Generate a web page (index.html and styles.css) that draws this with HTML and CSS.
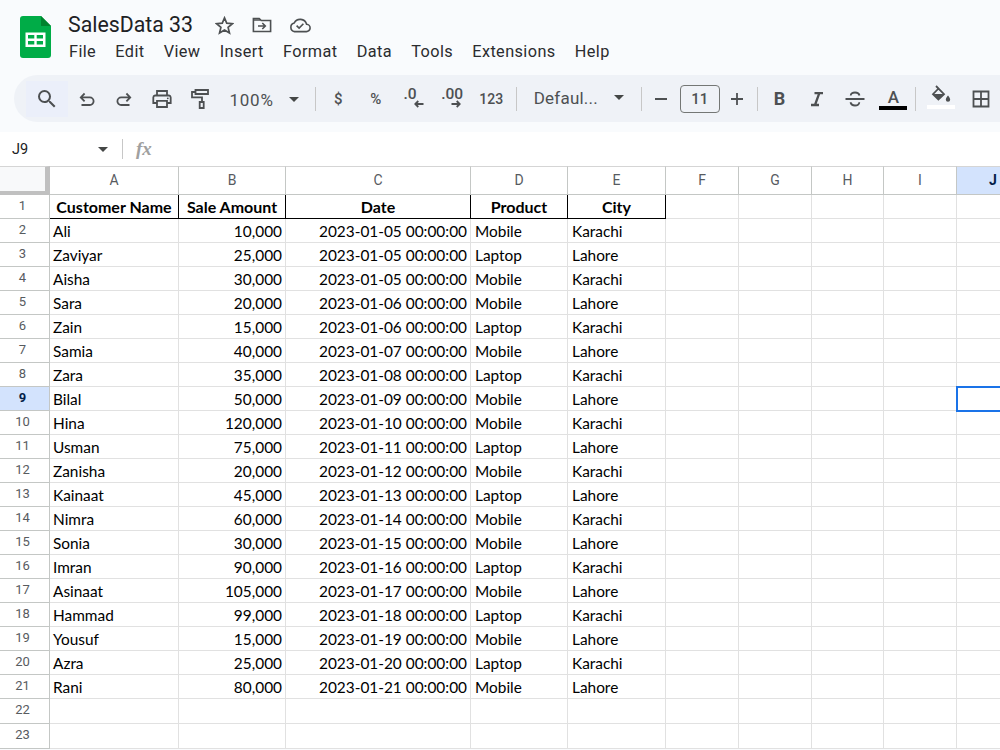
FILE: index.html
```html
<!DOCTYPE html>
<html lang="en">
<head>
    <meta charset="UTF-8">
    <meta name="viewport" content="width=device-width, initial-scale=1.0">
    <title>SalesData 33</title>
    <link rel="stylesheet" href="styles.css">
</head>
<body>
    <header class="header">
        <svg class="logo" viewBox="0 0 31 42">
            <path d="M3 0h18l10 10v29a3 3 0 0 1-3 3H3a3 3 0 0 1-3-3V3a3 3 0 0 1 3-3z"/>
            <path d="M21 0l10 10H21z"/>
            <path fill-rule="evenodd" d="M5.500 16.500h20v14.500h-20zM8 19v3.500h6.300V19zM16.700 19v3.500H23V19zM8 25v3.500h6.300V25zM16.700 25v3.500H23V25z"/>
        </svg>
        <div class="header-main">
            <div class="title-row">
                <h1 class="title">SalesData 33</h1>
                <svg class="title-icon star" viewBox="0 0 18 18"><path d="M9 1.800l2.100 5 5.400.5-4.100 3.500 1.300 5.300L9 13.200l-4.700 2.900 1.300-5.300L1.500 7.300l5.400-.5z"/></svg>
                <svg class="title-icon folder" viewBox="0 0 20 16"><path d="M1.400 1.500h5.800l2 2h9.400v11H1.400z"/><path d="M1.400 3h7M6 9h7M10.300 6l3 3-3 3"/></svg>
                <svg class="title-icon cloud" viewBox="0 0 22 16"><path d="M5.500 14.600h11.700a3.700 3.700 0 0 0 .4-7.400A6.700 6.700 0 0 0 5.200 6 4.400 4.400 0 0 0 5.500 14.600z"/><path d="M7.600 8.700l2.500 2.400 4.300-4.400"/></svg>
            </div>
            <nav class="menu">
                <span>File</span><span>Edit</span><span>View</span><span>Insert</span><span>Format</span><span>Data</span><span>Tools</span><span>Extensions</span><span>Help</span>
            </nav>
        </div>
    </header>

    <div class="toolbar">
        <div class="tool search">
            <svg width="24" height="24" viewBox="0 0 24 24"><path class="solid" d="M15.500 14h-.79l-.28-.27A6.470 6.470 0 0 0 16 9.500 6.500 6.500 0 1 0 9.500 16c1.610 0 3.090-.59 4.230-1.570l.27.28v.79l5 4.990L20.490 19l-4.990-5zm-6 0C7.010 14 5 11.990 5 9.500S7.010 5 9.500 5 14 7.010 14 9.500 11.990 14 9.500 14z"/></svg>
        </div>
        <div class="tool">
            <svg width="16" height="16" viewBox="0 0 16 16"><path d="M2.500 14h8.300a3.800 3.800 0 0 0 0-7.600H2M5.600 2.500L1.800 6.400l3.800 3.900"/></svg>
        </div>
        <div class="tool">
            <svg width="16" height="16" viewBox="0 0 16 16"><path d="M13.500 14H5.200a3.800 3.800 0 0 1 0-7.600H14M10.400 2.500l3.800 3.900-3.800 3.900"/></svg>
        </div>
        <div class="tool">
            <svg width="20" height="20" viewBox="0 0 20 20"><path d="M5 6V2h10v4M4.500 14H1.300V8.500A2 2 0 0 1 3 6.500h14a2 2 0 0 1 1.700 2V14h-3.200M5 11.800h10V18H5z"/><circle class="solid" cx="15.800" cy="9.300" r=".9"/></svg>
        </div>
        <div class="tool paint">
            <svg width="20" height="22" viewBox="0 0 20 22"><path d="M5.500 2h12.500v4H5.500zM5.500 4H2v5.300h10V14M9.700 14h4v6h-4z"/></svg>
        </div>
        <div class="zoom">100%<i class="caret"></i></div>
        <i class="separator"></i>
        <div class="tool text-tool dollar">$</div>
        <div class="tool text-tool">%</div>
        <div class="tool decimal">
            <span>.0</span>
            <svg width="10" height="8" viewBox="0 0 10 8"><path d="M9.500 4H1.500M4.300 1L1.300 4l3 3"/></svg>
        </div>
        <div class="tool decimal">
            <span>.00</span>
            <svg width="10" height="8" viewBox="0 0 10 8"><path d="M.5 4h8M5.700 1l3 3-3 3"/></svg>
        </div>
        <div class="tool number-format">123</div>
        <i class="separator"></i>
        <div class="font-name">Defaul...<i class="caret"></i></div>
        <i class="separator"></i>
        <div class="tool minus">
            <svg width="14" height="14" viewBox="0 0 14 14"><path d="M1 7h12"/></svg>
        </div>
        <div class="font-size">11</div>
        <div class="tool plus">
            <svg width="14" height="14" viewBox="0 0 14 14"><path d="M1 7h12M7 1v12"/></svg>
        </div>
        <i class="separator"></i>
        <div class="tool bold">B</div>
        <div class="tool">
            <svg width="14" height="16" viewBox="0 0 14 16"><path class="thick" d="M4.500 2.200h8.500M1 14h8M9.300 2.200L5 14"/></svg>
        </div>
        <div class="tool">
            <svg width="20" height="18" viewBox="0 0 20 18"><path d="M.5 9h19M14.500 5.500C14 3.300 12.400 2.500 10 2.500S5.700 3.700 5.700 5.600M5.500 12.300c.5 2.300 2.100 3.200 4.500 3.200s4.300-1 4.300-3.200"/></svg>
        </div>
        <div class="tool color-tool"><span>A</span><i class="swatch"></i></div>
        <i class="separator"></i>
        <div class="tool color-tool fill-tool">
            <svg width="20" height="18" viewBox="0 0 20 18"><path d="M5 1l8 8.200-5.600 5.300L2 9.200 7.500 3.500"/><path class="solid" d="M2.500 9h10l-5 5.300zM17 10.500s-2.200 2.500-2.200 4a2.200 2.200 0 0 0 4.400 0c0-1.500-2.200-4-2.200-4z"/></svg>
            <i class="swatch white"></i>
        </div>
        <div class="tool borders">
            <svg width="18" height="18" viewBox="0 0 18 18"><path d="M1.500 1.500h15v15h-15zM9 1.500v15M1.500 9h15"/></svg>
        </div>
    </div>

    <div class="formula-bar">
        <div class="name-box">J9<i class="caret"></i></div>
        <i class="separator"></i>
        <span class="fx">fx</span>
    </div>

    <table class="sheet">
        <colgroup>
            <col class="col-head"><col class="col-a"><col class="col-b"><col class="col-c"><col class="col-d"><col class="col-e"><col class="col-f"><col class="col-g"><col class="col-h"><col class="col-i"><col class="col-j">
        </colgroup>
        <thead>
            <tr>
                <th class="corner"></th><th>A</th><th>B</th><th>C</th><th>D</th><th>E</th><th>F</th><th>G</th><th>H</th><th>I</th><th class="active">J</th>
            </tr>
        </thead>
        <tbody id="rows"></tbody>
    </table>

<script>
const sales = [
    ['Ali', '10,000', '2023-01-05', 'Mobile', 'Karachi'],
    ['Zaviyar', '25,000', '2023-01-05', 'Laptop', 'Lahore'],
    ['Aisha', '30,000', '2023-01-05', 'Mobile', 'Karachi'],
    ['Sara', '20,000', '2023-01-06', 'Mobile', 'Lahore'],
    ['Zain', '15,000', '2023-01-06', 'Laptop', 'Karachi'],
    ['Samia', '40,000', '2023-01-07', 'Mobile', 'Lahore'],
    ['Zara', '35,000', '2023-01-08', 'Laptop', 'Karachi'],
    ['Bilal', '50,000', '2023-01-09', 'Mobile', 'Lahore'],
    ['Hina', '120,000', '2023-01-10', 'Mobile', 'Karachi'],
    ['Usman', '75,000', '2023-01-11', 'Laptop', 'Lahore'],
    ['Zanisha', '20,000', '2023-01-12', 'Mobile', 'Karachi'],
    ['Kainaat', '45,000', '2023-01-13', 'Laptop', 'Lahore'],
    ['Nimra', '60,000', '2023-01-14', 'Mobile', 'Karachi'],
    ['Sonia', '30,000', '2023-01-15', 'Mobile', 'Lahore'],
    ['Imran', '90,000', '2023-01-16', 'Laptop', 'Karachi'],
    ['Asinaat', '105,000', '2023-01-17', 'Mobile', 'Lahore'],
    ['Hammad', '99,000', '2023-01-18', 'Laptop', 'Karachi'],
    ['Yousuf', '15,000', '2023-01-19', 'Mobile', 'Lahore'],
    ['Azra', '25,000', '2023-01-20', 'Laptop', 'Karachi'],
    ['Rani', '80,000', '2023-01-21', 'Mobile', 'Lahore']
];
const headings = ['Customer Name', 'Sale Amount', 'Date', 'Product', 'City'];
const rows = document.getElementById('rows');

// Row 1 holds the headings, rows 2 to 21 the sales, the rest are empty
for (let number = 1; number <= 23; number++) {
    const row = document.createElement('tr');
    const head = document.createElement('th');
    head.textContent = number;
    row.appendChild(head);

    let values = [];
    if (number === 1) {
        values = headings;
        row.className = 'headings';
    } else if (sales[number - 2]) {
        values = sales[number - 2].slice();
        values[2] += ' 00:00:00';
    } else {
        row.className = 'empty';
    }

    for (let column = 0; column < 10; column++) {
        const cell = document.createElement('td');
        cell.textContent = values[column] || '';
        row.appendChild(cell);
    }

    if (number === 9) {
        head.className = 'active';
        row.lastChild.className = 'selected';
    }
    rows.appendChild(row);
}
</script>
</body>
</html>
```
FILE: styles.css
```css
/* General Styles */
body {
    font-family: Roboto, Arial, sans-serif;
    margin: 0;
    height: 750px;
    overflow: hidden;
    background-color: #f9fbfd;
    color: #202124;
}

svg {
    display: block;
    flex: none;
}

svg path {
    fill: none;
    stroke: #4d5052;
    stroke-width: 1.8;
}

svg .solid {
    fill: #4d5052;
    stroke: none;
}

svg .thick {
    stroke-width: 2.3;
}

/* Header */
.header {
    display: flex;
    height: 75px;
}

.logo {
    width: 31px;
    height: 42px;
    margin: 16px 17px 0 20px;
}

.logo path {
    stroke: none;
}

.logo path:nth-child(1) {
    fill: #00ac47;
}

.logo path:nth-child(2) {
    fill: #00832d;
}

.logo path:nth-child(3) {
    fill: #fff;
}

.title-row {
    display: flex;
    align-items: center;
    height: 28px;
    padding-top: 11px;
}

.title {
    width: 147px;
    margin: -2px 0 0;
    font-size: 21.3px;
    font-weight: 400;
    white-space: nowrap;
}

.title-icon path {
    stroke-width: 1.6;
}

.star {
    width: 19px;
    height: 19px;
    margin-right: 18px;
}

.folder {
    width: 20px;
    height: 16px;
    margin-right: 17px;
}

.cloud {
    width: 22px;
    height: 16px;
}

.menu {
    display: flex;
    gap: 19.2px;
    padding: 3px 0 0 1px;
    font-size: 16.3px;
    line-height: 20px;
    letter-spacing: 0.4px;
    color: #2b2c2f;
}

/* Toolbar */
.toolbar {
    display: flex;
    align-items: center;
    height: 47px;
    margin-left: 14px;
    padding-left: 12px;
    background-color: #eff2f7;
    border-radius: 24px 0 0 24px;
    color: #4d5052;
    overflow: hidden;
}

.tool {
    display: flex;
    flex: none;
    align-items: center;
    justify-content: center;
    box-sizing: border-box;
    width: 37.6px;
    height: 36px;
}

.search {
    width: 42px;
    background-color: #ebeffa;
}

.paint {
    padding-top: 1px;
}

.zoom {
    display: flex;
    flex: none;
    align-items: center;
    justify-content: space-between;
    width: 70px;
    margin: 2px 16px 0 11px;
    font-size: 17px;
    letter-spacing: 0.8px;
}

.caret {
    border: 5px solid transparent;
    border-top-color: #444746;
    border-bottom: 0;
}

.separator {
    flex: none;
    width: 1px;
    height: 24px;
    background-color: #c7c7c7;
}

.text-tool {
    font-size: 15px;
    font-weight: 500;
}

.dollar {
    margin-left: 3px;
}

.decimal {
    flex-direction: column;
    align-items: flex-start;
    padding-left: 9px;
    font-size: 15.5px;
    font-weight: 500;
    line-height: 12px;
}

.decimal span {
    margin-top: -2px;
}

.decimal svg {
    margin-left: 10px;
}

.number-format {
    width: 43px;
    margin-right: 3px;
    font-size: 14px;
    font-weight: 500;
}

.font-name {
    display: flex;
    flex: none;
    align-items: center;
    justify-content: space-between;
    width: 90px;
    margin: -2px 17px 0;
    font-size: 17px;
    letter-spacing: 0.2px;
}

.minus {
    width: 38px;
}

.plus {
    width: 34px;
    margin-right: 3px;
}

.font-size {
    flex: none;
    width: 38px;
    height: 26px;
    border: 1px solid #747775;
    border-radius: 4px;
    font-size: 15px;
    font-weight: 500;
    line-height: 26px;
    text-align: center;
}

.bold {
    margin-left: 3px;
    font-size: 18px;
    font-weight: 700;
}

.color-tool {
    flex-direction: column;
    margin: 1px 3px 0 1px;
    padding-top: 1px;
    font-size: 17px;
    font-weight: 500;
    line-height: 17px;
}

.swatch {
    width: 28px;
    height: 4px;
    background-color: #000;
}

.fill-tool {
    margin: 0 2px 0 6px;
    padding: 0 0 3px;
}

.white {
    margin-top: 2px;
    background-color: #fff;
}

/* Formula Bar */
.formula-bar {
    display: flex;
    align-items: center;
    height: 34px;
    margin-top: 10px;
    background-color: #fff;
}

.name-box {
    display: flex;
    align-items: center;
    justify-content: space-between;
    width: 96px;
    padding: 0 14px 0 12px;
    font-size: 14.5px;
}

.formula-bar .separator {
    height: 20px;
}

.fx {
    margin-left: 13px;
    font-family: "Liberation Serif", serif;
    font-size: 19px;
    font-style: italic;
    font-weight: 700;
    color: #a0a0a0;
}

/* Sheet */
.sheet {
    width: 1030px;
    table-layout: fixed;
    border-spacing: 0;
    background-color: #fff;
    font-family: Lato, Carlito, sans-serif;
    font-size: 15.4px;
    color: #000;
}

.col-head { width: 50px; }
.col-a { width: 129px; }
.col-b { width: 107px; }
.col-c { width: 185px; }
.col-d { width: 97px; }
.col-e { width: 98px; }
.col-f, .col-g, .col-i, .col-j { width: 73px; }
.col-h { width: 72px; }

th, td {
    box-sizing: border-box;
    height: 24px;
    padding: 0 3px;
    border-right: 1px solid #e1e1e1;
    border-bottom: 1px solid #e1e1e1;
    line-height: 22px;
    white-space: nowrap;
}

th {
    padding-bottom: 2px;
    border-color: #c4c7c5;
    font-family: Roboto, Arial, sans-serif;
    font-size: 14px;
    font-weight: 400;
    line-height: 20px;
    color: #575b5f;
}

tbody th {
    padding-right: 7px;
    font-size: 13px;
}

thead th {
    height: 29px;
    border-top: 1px solid #d5d5d5;
}

.corner {
    background-color: #f8f9fa;
    border-right: 5px solid #c0c0c0;
    border-bottom: 4px solid #c0c0c0;
}

th.active {
    background-color: #d3e3fd;
    font-weight: 700;
    color: #041e49;
}

td:nth-child(3), td:nth-child(4) {
    text-align: right;
}

td:nth-child(5), td:nth-child(6) {
    padding-left: 4px;
}

.headings td {
    padding: 0;
    font-size: 16px;
    font-weight: 700;
    text-align: center;
}

.headings td:nth-child(-n+6) {
    border-color: #000;
}

.empty td, .empty th {
    height: 25px;
}

.selected {
    outline: 2px solid #1a73e8;
    outline-offset: -1px;
}
```
